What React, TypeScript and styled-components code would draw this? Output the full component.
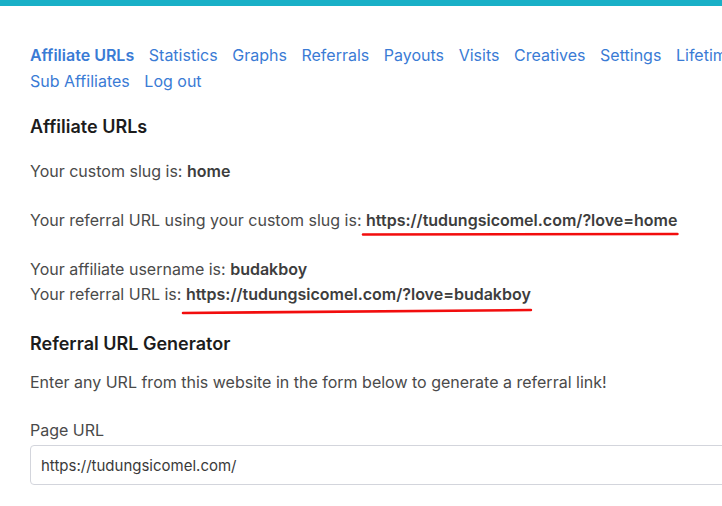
import React from "react";
import styled, { createGlobalStyle } from "styled-components";

const Global = createGlobalStyle`
  html, body { margin: 0; padding: 0; background: #fff; overflow: hidden; }
  body { font-family: Inter, "Noto Sans", sans-serif; -webkit-font-smoothing: antialiased; }
`;

const TopBar = styled.div`
  height: 6px;
  background: #19b0c7;
`;

const Page = styled.main`
  width: 820px;
  padding: 36px 0 0 30px;
`;

const Nav = styled.nav`
  display: flex;
  flex-wrap: wrap;
  column-gap: 14.6px;
  font-size: 16px;
  line-height: 26px;
`;

const NavLink = styled.a<{ $active?: boolean }>`
  color: #3a7bd5;
  text-decoration: none;
  font-weight: ${(p) => (p.$active ? 600 : 400)};
  white-space: nowrap;
`;

const Heading = styled.h2<{ $top: number; $bottom: number }>`
  margin: ${(p) => p.$top}px 0 ${(p) => p.$bottom}px;
  font-size: 18px;
  line-height: 22px;
  font-weight: 600;
  color: #1c1c1c;
`;

const Para = styled.p<{ $bottom?: number }>`
  margin: 0 0 ${(p) => p.$bottom ?? 24}px;
  font-size: 16px;
  line-height: 25px;
  color: #4a4a4a;
`;

const Strong = styled.strong`
  font-weight: 600;
  color: #3d3d3d;
`;

const Marked = styled.strong`
  position: relative;
  display: inline-block;
  font-weight: 600;
  color: #3d3d3d;
`;

const Scribble = styled.svg<{ $offset: number }>`
  position: absolute;
  left: -3px;
  bottom: ${(p) => p.$offset}px;
  width: calc(100% + 3px);
  height: 8px;
  overflow: visible;
  pointer-events: none;
`;

const Label = styled.label`
  display: block;
  font-size: 16px;
  line-height: 25px;
  color: #4a4a4a;
  margin-bottom: 2px;
`;

const Input = styled.input`
  box-sizing: border-box;
  width: 800px;
  height: 40px;
  padding: 0 10px;
  border: 1px solid #d3d5dc;
  border-radius: 4px;
  font-family: Inter, "Noto Sans", sans-serif;
  font-size: 15px;
  color: #3a3a3a;
  background: #fff;
  outline: none;
`;

function RedLine({ offset, rise }: { offset: number; rise: number }) {
  return (
    <Scribble $offset={offset} viewBox="0 0 100 8" preserveAspectRatio="none">
      <path
        d={`M0 ${4 + rise} Q50 ${4 + rise / 3} 100 4`}
        stroke="#f20d0d"
        strokeWidth="2.6"
        fill="none"
        strokeLinecap="round"
        vectorEffect="non-scaling-stroke"
      />
    </Scribble>
  );
}

const links = [
  "Affiliate URLs",
  "Statistics",
  "Graphs",
  "Referrals",
  "Payouts",
  "Visits",
  "Creatives",
  "Settings",
  "Lifetime Customers",
  "Sub Affiliates",
  "Log out",
];

export default function App() {
  return (
    <>
      <Global />
      <TopBar />
      <Page>
        <Nav>
          {links.map((l, i) => (
            <NavLink key={l} href="#" $active={i === 0}>
              {l}
            </NavLink>
          ))}
        </Nav>
        <Heading $top={22} $bottom={21}>Affiliate URLs</Heading>
        <Para>
          Your custom slug is: <Strong>home</Strong>
        </Para>
        <Para>
          Your referral URL using your custom slug is:{" "}
          <Marked>
            https://tudungsicomel.com/?love=home
            <RedLine offset={-5} rise={0.5} />
          </Marked>
        </Para>
        <Para $bottom={26}>
          Your affiliate username is: <Strong>budakboy</Strong>
          <br />
          Your referral URL is:{" "}
          <Marked>
            https://tudungsicomel.com/?love=budakboy
            <RedLine offset={-7} rise={3} />
          </Marked>
        </Para>
        <Heading $top={0} $bottom={15}>Referral URL Generator</Heading>
        <Para $bottom={23}>
          Enter any URL from this website in the form below to generate a referral link!
        </Para>
        <Label htmlFor="page-url">Page URL</Label>
        <Input id="page-url" defaultValue="https://tudungsicomel.com/" />
      </Page>
    </>
  );
}
